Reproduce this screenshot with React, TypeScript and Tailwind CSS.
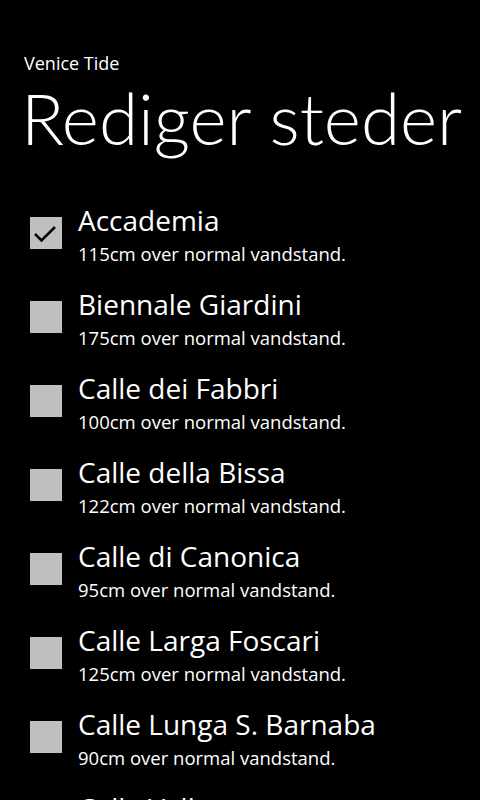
const places = [
  { name: "Accademia", level: 115, checked: true },
  { name: "Biennale Giardini", level: 175, checked: false },
  { name: "Calle dei Fabbri", level: 100, checked: false },
  { name: "Calle della Bissa", level: 122, checked: false },
  { name: "Calle di Canonica", level: 95, checked: false },
  { name: "Calle Larga Foscari", level: 125, checked: false },
  { name: "Calle Lunga S. Barnaba", level: 90, checked: false },
  { name: "Calle Vallaresso", level: 105, checked: false },
];

function CheckBox({ checked }: { checked: boolean }) {
  return (
    <div className="w-8 h-8 bg-[#bfbfbf] shrink-0 flex items-center justify-center">
      {checked && (
        <svg width="32" height="32" viewBox="0 0 32 32">
          <path d="M5 17 L11.5 23.5 L25 10" fill="none" stroke="#000" strokeWidth="2.6" />
        </svg>
      )}
    </div>
  );
}

export default function App() {
  return (
    <main
      className="w-[480px] h-[800px] overflow-hidden bg-black text-white"
      style={{ fontFamily: '"Open Sans", "Noto Sans", sans-serif' }}
    >
      <div className="pl-6 pt-[52px]">
        <p className="text-[18px] leading-[22px]">Venice Tide</p>
        <h1
          className="text-[71px] font-light leading-[88px] -ml-[3px] whitespace-nowrap"
          style={{ fontFamily: 'Lato, "Open Sans", sans-serif' }}
        >
          Rediger steder
        </h1>
      </div>
      <ul className="mt-[40px] pl-[30px]">
        {places.map((p) => (
          <li key={p.name} className="h-[84px] flex items-start gap-4">
            <div className="pt-[15px]">
              <CheckBox checked={p.checked} />
            </div>
            <div className="flex flex-col">
              <span className="text-[28px] leading-[36px] whitespace-nowrap">{p.name}</span>
              <span className="text-[18.5px] leading-[26px] mt-[3px] whitespace-nowrap">{p.level}cm over normal vandstand.</span>
            </div>
          </li>
        ))}
      </ul>
    </main>
  );
}
